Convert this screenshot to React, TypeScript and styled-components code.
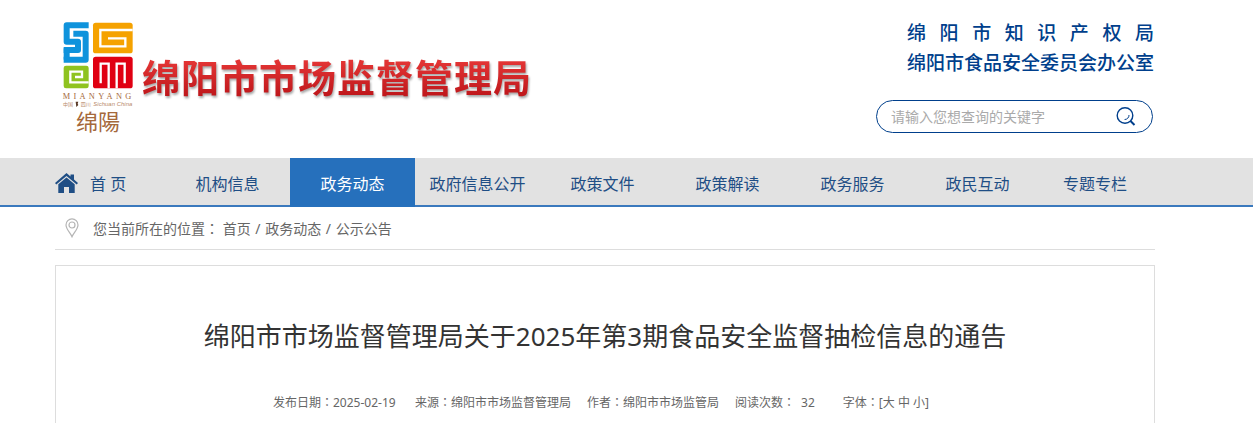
import React from "react";
import styled, { createGlobalStyle } from "styled-components";

const GlobalStyle = createGlobalStyle`
  * { box-sizing: border-box; }
  body {
    margin: 0;
    background: #fff;
    color: #666;
    font-family: "Noto Sans", "Noto Sans CJK SC", sans-serif;
    font-size: 14px;
  }
  a { color: inherit; text-decoration: none; }
`;

const Container = styled.div`
  padding: 0 98px 0 55px;
`;

const Header = styled(Container).attrs({ as: "header" })`
  display: flex;
  justify-content: space-between;
  align-items: flex-start;
  padding-bottom: 20px;
`;

const Brand = styled.a`
  display: flex;
  align-items: flex-start;
  gap: 8px;
  padding: 18px 0 0 7px;
`;

const SiteName = styled.h1`
  margin: 34px 0 0;
  font-size: 38px;
  line-height: 50px;
  font-weight: 700;
  letter-spacing: 1px;
  white-space: nowrap;
  color: transparent;
  background: linear-gradient(#e23434 20%, #c0181c 85%);
  background-clip: text;
  -webkit-background-clip: text;
  filter: drop-shadow(1px 2px 1px rgba(0, 0, 0, 0.35));
`;

const HeaderSide = styled.div`
  width: 279px;
  padding: 18px 1px 0 0;
`;

const Offices = styled.div`
  width: 247px;
  margin-left: auto;
  color: #003f8c;
  font-size: 19px;
  line-height: 30px;
  font-weight: 500;
`;

const Office = styled.div`
  white-space: nowrap;
  text-align: justify;
  text-align-last: justify;
`;

const Search = styled.form`
  display: flex;
  align-items: center;
  height: 33px;
  margin: 22px 1px 0 0;
  padding: 0 16px 0 14px;
  border: 1px solid #003f8c;
  border-radius: 17px;
`;

const SearchInput = styled.input`
  flex: 1;
  min-width: 0;
  padding: 0;
  border: 0;
  outline: 0;
  background: none;
  font: inherit;
  font-size: 14px;
  &::placeholder { color: #aaa; opacity: 1; }
`;

const SearchButton = styled.button`
  display: flex;
  padding: 0;
  border: 0;
  background: none;
  cursor: pointer;
`;

const NavBar = styled.nav`
  background: linear-gradient(#3a79bd, #3a79bd) bottom / 100% 2px no-repeat #e2e2e2;
`;

const NavList = styled(Container)`
  display: flex;
  padding-right: 103px;
`;

const NavItem = styled.a<{ $share?: number; $active?: boolean; $start?: boolean }>`
  display: flex;
  flex: ${(p) => p.$share ?? 25} 1 0;
  align-items: center;
  justify-content: ${(p) => (p.$start ? "flex-start" : "center")};
  gap: 12px;
  height: 49px;
  font-size: 16px;
  white-space: nowrap;
  color: ${(p) => (p.$active ? "#fff" : "#1f4e85")};
  background: ${(p) => (p.$active ? "#2670bc" : "none")};
`;

const Crumbs = styled.div`
  display: flex;
  align-items: center;
  height: 43px;
  margin: 0 98px 15px 55px;
  padding-left: 10px;
  gap: 14px;
  border-bottom: 1px solid #ddd;
`;

const Slash = styled.span`
  margin: 0 1px;
`;

const Colon = styled.span`
  font-family: "Noto Sans CJK TC", sans-serif;
`;

const Article = styled.article`
  margin: 0 98px 0 55px;
  padding: 50px 0 40px;
  border: 1px solid #ddd;
`;

const ArticleTitle = styled.h2`
  margin: 0;
  font-size: 26px;
  line-height: 40px;
  font-weight: 400;
  color: #333;
  text-align: center;
`;

const Meta = styled.div`
  display: flex;
  justify-content: center;
  gap: 16px;
  margin-top: 36px;
  padding-right: 8px;
  font-size: 12px;
  line-height: 20px;
  white-space: nowrap;
`;

const MetaItem = styled.span<{ $apart?: boolean }>`
  padding-left: ${(p) => (p.$apart ? "12px" : "0")};
`;

const PublishDate = styled(MetaItem)`
  min-width: 126px;
`;

const Count = styled.span`
  margin-left: 6px;
`;

const SizeButton = styled.button`
  padding: 0;
  border: 0;
  background: none;
  color: inherit;
  font: inherit;
  cursor: pointer;
`;

const Logo = () => (
  <svg width="72" height="120" viewBox="186 54 216 360" role="img" aria-label="绵阳">
    <g transform="translate(183 60)" fill="none">
      <path d="M83 16H17V65H51V90H8" stroke="#0f93dc" strokeWidth="18" strokeLinejoin="round" />
      <path d="M37 41H74V119H8" stroke="#0f93dc" strokeWidth="18" strokeLinejoin="round" />
      <path d="M17 85V119" stroke="#0f93dc" strokeWidth="18" />
      <rect x="8" y="137" width="75" height="68" rx="7" fill="#8fc31f" />
      <path d="M83 187H28V155H63V171H42" stroke="#fff" strokeWidth="7" />
    </g>
    <g transform="translate(264 60)" fill="none">
      <rect x="15" y="8" width="119" height="92" rx="8" fill="#f5a200" />
      <path d="M134 30H37V79H112V55H60" stroke="#fff" strokeWidth="7" />
      <rect x="15" y="110" width="119" height="95" rx="8" fill="#e00012" />
      <path d="M38 190V131H62V205M86 205V131H110V190" stroke="#fff" strokeWidth="7" />
    </g>
    <g fill="#a5693c">
      <text x="188" y="297" fontFamily="Liberation Serif" fontSize="25" letterSpacing="10">MIANYANG</text>
      <g fill="#b98c6c">
        <text x="189" y="319" fontFamily="Liberation Sans, Noto Sans CJK SC" fontSize="15">中国</text>
        <text x="242" y="319" fontFamily="Liberation Sans, Noto Sans CJK SC" fontSize="15">四川</text>
        <text x="280" y="319" fontFamily="Liberation Sans" fontStyle="italic" fontSize="18">Sichuan China</text>
      </g>
      <path d="M227 305h8l-2 6 2 4-6 6z" fill="#5a3a28" />
      <text x="228" y="389" fontFamily="Noto Sans CJK TC" fontWeight="400" fontSize="66">绵陽</text>
    </g>
  </svg>
);

const SearchIcon = () => (
  <svg width="20" height="20" viewBox="0 0 20 20" fill="none" stroke="#003f8c">
    <circle cx="9" cy="8.500" r="7.800" strokeWidth="1.400" />
    <path d="M14.500 14L18.500 18" strokeWidth="2" />
    <path d="M13 8A4.300 4.300 0 0 1 8.600 12.500" strokeWidth="1" />
  </svg>
);

const HomeIcon = () => (
  <svg width="23" height="20" viewBox="0 0 23 20" fill="#1f4e85">
    <path d="M0 10L11.500 0 15.500 3.400V1.500H19V6.500L23 10 21.700 11.600 11.500 3 1.300 11.600z" />
    <path d="M3.300 11.300L11.500 4.600 19.700 11.300V20H14V14H9V20H3.300z" />
  </svg>
);

const PinIcon = () => (
  <svg width="14" height="20" viewBox="0 0 14 20" fill="none" stroke="#b5b5b5" strokeWidth="1.200">
    <path d="M7 18.700C5.500 15 1 11 1 6.900A6 6 0 0 1 13 6.900C13 11 8.500 15 7 18.700z" />
    <circle cx="7" cy="7" r="3" />
  </svg>
);

const sections = [
  "机构信息",
  "政务动态",
  "政府信息公开",
  "政策文件",
  "政策解读",
  "政务服务",
  "政民互动",
];

export default function App() {
  return (
    <>
      <GlobalStyle />
      <Header>
        <Brand href="#">
          <Logo />
          <SiteName>绵阳市市场监督管理局</SiteName>
        </Brand>
        <HeaderSide>
          <Offices>
            <Office>绵 阳 市 知 识 产 权 局</Office>
            <Office>绵阳市食品安全委员会办公室</Office>
          </Offices>
          <Search onSubmit={(e) => e.preventDefault()}>
            <SearchInput type="text" aria-label="搜索" placeholder="请输入您想查询的关键字" />
            <SearchButton type="submit" aria-label="搜索">
              <SearchIcon />
            </SearchButton>
          </Search>
        </HeaderSide>
      </Header>

      <NavBar>
        <NavList>
          <NavItem href="#" $share={22} $start>
            <HomeIcon />
            首 页
          </NavItem>
          {sections.map((name) => (
            <NavItem href="#" key={name} $active={name === "政务动态"}>
              {name}
            </NavItem>
          ))}
          <NavItem href="#" $share={22}>专题专栏</NavItem>
        </NavList>
      </NavBar>

      <Crumbs>
        <PinIcon />
        <span>
          您当前所在的位置<Colon>：</Colon> <a href="#">首页</a> <Slash>/</Slash>{" "}
          <a href="#">政务动态</a> <Slash>/</Slash> <a href="#">公示公告</a>
        </span>
      </Crumbs>

      <Article>
        <ArticleTitle>绵阳市市场监督管理局关于2025年第3期食品安全监督抽检信息的通告</ArticleTitle>
        <Meta>
          <PublishDate>发布日期<Colon>：</Colon>2025-02-19</PublishDate>
          <MetaItem>来源<Colon>：</Colon>绵阳市市场监督管理局</MetaItem>
          <MetaItem>作者<Colon>：</Colon>绵阳市市场监管局</MetaItem>
          <MetaItem>阅读次数<Colon>：</Colon><Count>32</Count></MetaItem>
          <MetaItem $apart>
            字体<Colon>：</Colon>[<SizeButton type="button">大</SizeButton>{" "}
            <SizeButton type="button">中</SizeButton> <SizeButton type="button">小</SizeButton>]
          </MetaItem>
        </Meta>
      </Article>
    </>
  );
}
